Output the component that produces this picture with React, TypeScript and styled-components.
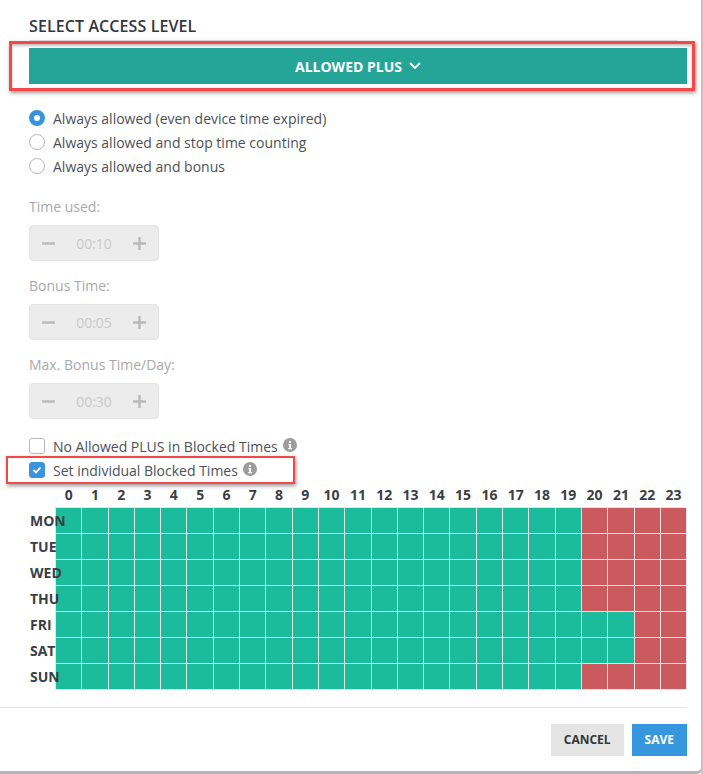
import styled, { createGlobalStyle } from "styled-components";

const GlobalStyle = createGlobalStyle`
  html, body {
    margin: 0;
    padding: 0;
    background: #8f8f8f;
    font-family: "Open Sans", "Liberation Sans", sans-serif;
    color: #3a3f45;
  }
`;

// Styles for the page
const Page = styled.div`
  width: 703px;
  height: 774px;
  overflow: hidden;
  background: linear-gradient(90deg, #ffffff 701px, #c4c4c8 701px);
`;

const Modal = styled.div`
  width: 701px;
  height: 771px;
  box-sizing: border-box;
  padding-right: 14px;
  background: #ffffff;
  border-bottom-right-radius: 4px;
  box-shadow: 0 3px 0 #b4b4b6;
`;

const Body = styled.div`
  padding-left: 29px;
  display: flex;
  flex-direction: column;
`;

const Title = styled.div`
  height: 41px;
  box-sizing: border-box;
  padding-top: 16px;
  margin-right: 10px;
  border-bottom: 1px solid #e2e2e2;
  font-size: 16px;
  letter-spacing: 0.1px;
  line-height: 20px;
  font-weight: 600;
  color: #33373c;
  text-transform: uppercase;
`;

const Highlighted = styled.div`
  position: relative;
`;

const RedBox = styled.div`
  position: absolute;
  border: 3px solid #f44848;
  box-shadow: 1px 2px 4px rgba(0, 0, 0, 0.4), inset 0 2px 3px rgba(0, 0, 0, 0.25);
  pointer-events: none;
  box-sizing: border-box;
`;

const AccessBox = styled(RedBox)`
  left: -20px;
  right: -8px;
  top: 0;
  height: 50px;
`;

const BlockedBox = styled(RedBox)`
  left: -23px;
  top: -2px;
  width: 289px;
  height: 28px;
  border-width: 2.5px;
  box-shadow: 1px 2px 4px rgba(0, 0, 0, 0.4);
`;

const LevelWrap = styled.div`
  padding: 7px 0;
  margin-bottom: 15px;
`;

const LevelButton = styled.div`
  height: 36px;
  background: #25a598;
  color: #ffffff;
  font-size: 14px;
  font-weight: 700;
  display: flex;
  align-items: center;
  justify-content: center;
  gap: 7px;
  text-transform: uppercase;
`;

const RadioList = styled.div`
  display: flex;
  flex-direction: column;
  margin-bottom: 17px;
`;

const OptionRow = styled.div`
  height: 24px;
  display: flex;
  align-items: center;
  gap: 8px;
  font-size: 14px;
  color: #4c5157;
`;

const Radio = styled.span<{ $checked?: boolean }>`
  width: 16px;
  height: 16px;
  box-sizing: border-box;
  border-radius: 50%;
  border: ${(p) => (p.$checked ? "5px solid #3a93dd" : "1px solid #b5b9bd")};
  background: #ffffff;
`;

const Field = styled.div`
  margin-bottom: 13px;
`;

const FieldLabel = styled.div`
  height: 30px;
  font-size: 14px;
  line-height: 24px;
  color: #a9a9a9;
`;

const Stepper = styled.div`
  width: 130px;
  height: 36px;
  box-sizing: border-box;
  padding: 0 12px;
  background: #ececec;
  border: 1px solid #e4e4e4;
  border-radius: 4px;
  display: flex;
  align-items: center;
  justify-content: space-between;
  font-size: 14px;
  color: #c9c9c9;
`;

const StepIcon = styled.svg`
  width: 13px;
  height: 13px;
  display: block;
  stroke: #b9b9b9;
  stroke-width: 2.4;
`;

const Checks = styled.div`
  display: flex;
  flex-direction: column;
  margin-top: 2px;
`;

const Checkbox = styled.span<{ $checked?: boolean }>`
  width: 16px;
  height: 16px;
  box-sizing: border-box;
  border-radius: 3px;
  border: 1px solid ${(p) => (p.$checked ? "#3a93dd" : "#b5b9bd")};
  background: ${(p) => (p.$checked ? "#3a93dd" : "#ffffff")};
  display: flex;
  align-items: center;
  justify-content: center;
`;

const InfoIcon = styled.svg`
  width: 14px;
  height: 14px;
  margin-left: -3px;
  margin-bottom: 2px;
  display: block;
`;

const Schedule = styled.div`
  display: grid;
  grid-template-columns: 27px repeat(24, 26.3px);
  grid-auto-rows: 26px;
`;

const Corner = styled.div`
  height: 26px;
`;

const Hour = styled.div`
  padding-right: 1px;
  font-size: 14px;
  font-weight: 700;
  line-height: 26px;
  text-align: center;
  color: #3a3f45;
`;

const Day = styled.div`
  position: relative;
  z-index: 1;
  padding-left: 1px;
  font-size: 14px;
  font-weight: 700;
  line-height: 26px;
  white-space: nowrap;
  color: #3a3f45;
  text-transform: uppercase;
`;

const Cell = styled.div<{ $blocked: boolean }>`
  box-sizing: border-box;
  background: ${(p) => (p.$blocked ? "#cb5a5f" : "#1bbc9b")};
  border-right: 1px solid #e4e4e4;
  border-bottom: 1px solid #e4e4e4;
  box-shadow: -1px -1px 0 #e4e4e4;
`;

const Footer = styled.div`
  margin-top: 17px;
  height: 64px;
  border-top: 1px solid #e4e4e4;
  box-sizing: border-box;
  padding-top: 16px;
  display: flex;
  justify-content: flex-end;
  gap: 8px;
`;

const FooterButton = styled.div<{ $primary?: boolean }>`
  height: 32px;
  padding: 0 13px;
  background: ${(p) => (p.$primary ? "#3697de" : "#e4e4e4")};
  color: ${(p) => (p.$primary ? "#ffffff" : "#33373c")};
  font-size: 12px;
  font-weight: 700;
  line-height: 32px;
  text-transform: uppercase;
`;

const hours = Array.from({ length: 24 }, (_, i) => i);

const days = [
  { name: "Mon", blockedFrom: 20 },
  { name: "Tue", blockedFrom: 20 },
  { name: "Wed", blockedFrom: 20 },
  { name: "Thu", blockedFrom: 20 },
  { name: "Fri", blockedFrom: 22 },
  { name: "Sat", blockedFrom: 22 },
  { name: "Sun", blockedFrom: 20 },
];

const timeFields = [
  { label: "Time used:", value: "00:10" },
  { label: "Bonus Time:", value: "00:05" },
  { label: "Max. Bonus Time/Day:", value: "00:30" },
];

const Info = () => (
  <InfoIcon viewBox="0 0 14 14">
    <circle cx="7" cy="7" r="7" fill="#9c9c9c" />
    <rect x="6" y="3" width="2" height="2" fill="#fff" />
    <path d="M5.5 6h2.5v4h1v1.2H5.2V10h1V7.2h-.7z" fill="#fff" />
  </InfoIcon>
);

const App = () => {
  return (
    <Page>
      <GlobalStyle />
      <Modal>
        <Body>
          <Title>Select access level</Title>
          <Highlighted>
            <AccessBox />
            <LevelWrap>
              <LevelButton>
                Allowed Plus
                <svg width="12" height="8" viewBox="0 0 12 8" fill="none">
                  <path d="M1 1l5 5 5-5" stroke="#fff" strokeWidth="1.8" />
                </svg>
              </LevelButton>
            </LevelWrap>
          </Highlighted>

          <RadioList>
            <OptionRow>
              <Radio $checked />
              Always allowed (even device time expired)
            </OptionRow>
            <OptionRow>
              <Radio />
              Always allowed and stop time counting
            </OptionRow>
            <OptionRow>
              <Radio />
              Always allowed and bonus
            </OptionRow>
          </RadioList>

          {timeFields.map((field) => (
            <Field key={field.label}>
              <FieldLabel>{field.label}</FieldLabel>
              <Stepper>
                <StepIcon viewBox="0 0 13 13">
                  <path d="M0 6.5h13" />
                </StepIcon>
                {field.value}
                <StepIcon viewBox="0 0 13 13">
                  <path d="M0 6.5h13M6.5 0v13" />
                </StepIcon>
              </Stepper>
            </Field>
          ))}

          <Checks>
            <OptionRow>
              <Checkbox />
              No Allowed PLUS in Blocked Times
              <Info />
            </OptionRow>
            <Highlighted>
              <BlockedBox />
              <OptionRow>
                <Checkbox $checked>
                  <svg width="10" height="8" viewBox="0 0 10 8" fill="none">
                    <path d="M1.5 4l2.5 2.4L8.5 1.5" stroke="#fff" strokeWidth="1.8" />
                  </svg>
                </Checkbox>
                Set individual Blocked Times
                <Info />
              </OptionRow>
            </Highlighted>
          </Checks>

          <Schedule>
            <Corner />
            {hours.map((h) => (
              <Hour key={h}>{h}</Hour>
            ))}
            {days.map((day) => (
              <DayRow key={day.name} name={day.name} blockedFrom={day.blockedFrom} />
            ))}
          </Schedule>
        </Body>

        <Footer>
          <FooterButton>Cancel</FooterButton>
          <FooterButton $primary>Save</FooterButton>
        </Footer>
      </Modal>
    </Page>
  );
};

type DayRowProps = {
  name: string;
  blockedFrom: number;
};
const DayRow = ({ name, blockedFrom }: DayRowProps) => (
  <>
    <Day>{name}</Day>
    {hours.map((h) => (
      <Cell key={h} $blocked={h >= blockedFrom} />
    ))}
  </>
);

export default App;
